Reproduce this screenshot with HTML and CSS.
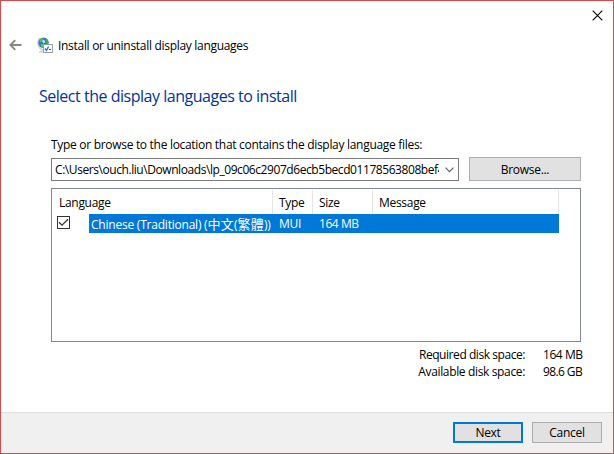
FILE: index.html
```html
<!DOCTYPE html>
<html lang="en">
<head>
<meta charset="utf-8">
<title>Install or uninstall display languages</title>
<link rel="stylesheet" href="styles.css">
</head>
<body>
<div class="window">
  <div class="caption">
    <svg class="close" width="11" height="11" viewBox="0 0 11 11"><path d="M.7.7l9.6 9.6M10.3.7L.7 10.3"/></svg>
  </div>
  <header class="titlebar">
    <svg class="back" width="13" height="12" viewBox="0 0 13 12"><path d="M12.500 6H1.500M6.200 1.200L1.400 6l4.800 4.800"/></svg>
    <svg class="app-icon" width="16" height="16" viewBox="0 0 16 16">
      <path d="M3 1C.4 3.400 0 8 3 11.300c1 1 2.500 1.700 4 1.700M4.500 13v1.500M2 15h5" fill="none" stroke="#cfd2d5" stroke-width="1.500"/>
      <circle cx="6.500" cy="5.800" r="5.200" fill="#2f74d6"/>
      <path d="M2.500 3.500c1-1.700 2.500-2.600 4.200-2.600L6 2.800 4.500 4 3 6z" fill="#55c24d"/>
      <path d="M8.800 1.500l2 1.500 1 3-1.600 1-1.600-1.500z" fill="#3fb045"/>
      <path d="M3.500 7l2.700.3.500 1.700-1 1.500-1.500-1z" fill="#5fcb55"/>
      <path d="M4.800 3.800l2.500-1 1 2.400-2 1.300z" fill="#b4ecff"/>
      <rect x="6.500" y="7.500" width="9" height="8" fill="#fff" stroke="#9a9fa4"/>
      <path d="M8 11.500l1.500 2L11.500 9.500" fill="none" stroke="#1677cf" stroke-width="1.300"/>
      <path d="M12 12.500h2" stroke="#555" stroke-width="1"/>
    </svg>
    <span class="t-title">Install or uninstall display languages</span>
  </header>
  <main class="page">
    <h1>Select the display languages to install</h1>
    <div class="form">
      <label class="prompt">Type or browse to the location that contains the display language files:</label>
      <div class="source">
        <div class="combo">
          <span class="path">C:\Users\ouch.liu\Downloads\lp_09c06c2907d6ecb5becd01178563808bef4</span>
          <svg width="9" height="6" viewBox="0 0 9 6"><path d="M.5.7l4 4 4-4"/></svg>
        </div>
        <button class="btn browse"><span>Browse...</span></button>
      </div>
      <div class="list">
        <div class="row head">
          <div class="c-lang"><span>Language</span></div>
          <div class="c-type"><span>Type</span></div>
          <div class="c-size"><span>Size</span></div>
          <div class="c-msg"><span class="message">Message</span></div>
        </div>
        <div class="item">
          <div class="check"><svg width="11" height="11" viewBox="0 0 11 11"><path d="M1 5.200l3 3L10 2.200"/></svg></div>
          <div class="row selected">
            <div class="c-lang"><span>Chinese (Traditional) (<span class="cjk">中文</span>(<span class="cjk">繁體</span>))</span></div>
            <div class="c-type"><span class="mui">MUI</span></div>
            <div class="c-size"><span class="mb">164 MB</span></div>
            <div class="c-msg"></div>
          </div>
        </div>
      </div>
      <div class="space">
        <span class="req">Required disk space:</span><span class="mb">164 MB</span>
        <span class="avail">Available disk space:</span><span class="gb">98.6 GB</span>
      </div>
    </div>
  </main>
  <footer class="footer">
    <button class="btn primary"><span>Next</span></button>
    <button class="btn"><span>Cancel</span></button>
  </footer>
</div>
</body>
</html>
```
FILE: styles.css
```css
* { box-sizing: border-box; }
body {
  margin: 0;
  font: 12px/17px "Open Sans", "Noto Sans CJK TC", sans-serif;
  letter-spacing: -0.3px;
  color: #000;
}
.window {
  width: 614px;
  height: 454px;
  display: flex;
  flex-direction: column;
  background: #fff;
  border: 1px solid #d9484f;
  overflow: hidden;
}
svg { display: block; flex: none; }
.caption {
  height: 35px;
  display: flex;
  justify-content: flex-end;
  padding: 9px 10px 0 0;
}
.close { fill: none; stroke: #000; stroke-width: 1.1; }
.titlebar {
  height: 18px;
  display: flex;
  align-items: center;
  padding-left: 8px;
}
.back { fill: none; stroke: #868686; stroke-width: 1.9; }
.app-icon { margin: 0 5px 0 15px; }
.page { flex: 1; padding: 31px 32px 0 38px; }
h1 {
  margin: 0;
  font-size: 16px;
  font-weight: 400;
  line-height: 22px;
  letter-spacing: -0.48px;
  color: #003399;
  white-space: nowrap;
}
.form { margin: 29px 0 0 12px; width: 530px; }
.prompt { display: block; white-space: nowrap; }
.source { display: flex; justify-content: space-between; align-items: flex-end; height: 28px; }
.combo {
  width: 408px;
  height: 23px;
  border: 1px solid #7a7a7a;
  display: flex;
  align-items: center;
  padding: 0 4px 0 3px;
}
.combo svg { margin-left: 6px; fill: none; stroke: #606060; stroke-width: 1.2; }
.path { width: 384px; overflow: hidden; white-space: nowrap; letter-spacing: -0.43px; }
.btn {
  width: 70px;
  height: 21px;
  padding: 0;
  border: 1px solid #adadad;
  background: #e1e1e1;
  font: inherit;
  letter-spacing: inherit;
  color: #000;
  line-height: 17px;
}
.btn.browse { width: 112px; height: 24px; }
.btn.primary { border: 2px solid #0078d7; }
.list {
  margin-top: 7px;
  height: 154px;
  border: 1px solid #828790;
}
.row { display: flex; white-space: nowrap; }
.head { height: 25px; padding-top: 1px; line-height: 26px; }
.head > div { border-right: 1px solid #e5e5e5; }
.head .c-lang { width: 221px; padding-left: 7px; }
.c-type { width: 40px; padding-left: 6px; }
.c-size { width: 60px; padding-left: 6px; }
.c-msg { width: 186px; padding-left: 6px; }
.item { display: flex; height: 19px; padding-left: 5px; }
.check {
  width: 13px;
  height: 13px;
  margin: 2px 19px 0 0;
  border: 1px solid #333;
}
.check path { fill: none; stroke: #333; stroke-width: 1.3; }
.selected { width: 470px; height: 19px; background: #0078d7; color: #fff; line-height: 20px; }
.selected .c-lang { width: 184px; padding-left: 2px; letter-spacing: -0.22px; }
.cjk { font-size: 13px; letter-spacing: 0.3px; }
.mb { letter-spacing: -0.45px; }
.gb { letter-spacing: -0.6px; }
.req { letter-spacing: -0.44px; }
.avail { letter-spacing: -0.35px; }
.space {
  display: grid;
  grid-template-columns: auto 38px;
  column-gap: 18px;
  justify-content: end;
  justify-items: end;
  margin-top: 4px;
  white-space: nowrap;
}
.space .mb, .space .gb { justify-self: start; }
.footer {
  height: 41px;
  display: flex;
  justify-content: flex-end;
  gap: 9px;
  padding: 9px 11px 0 0;
  background: #f0f0f0;
  border-top: 1px solid #dfdfdf;
}
```
